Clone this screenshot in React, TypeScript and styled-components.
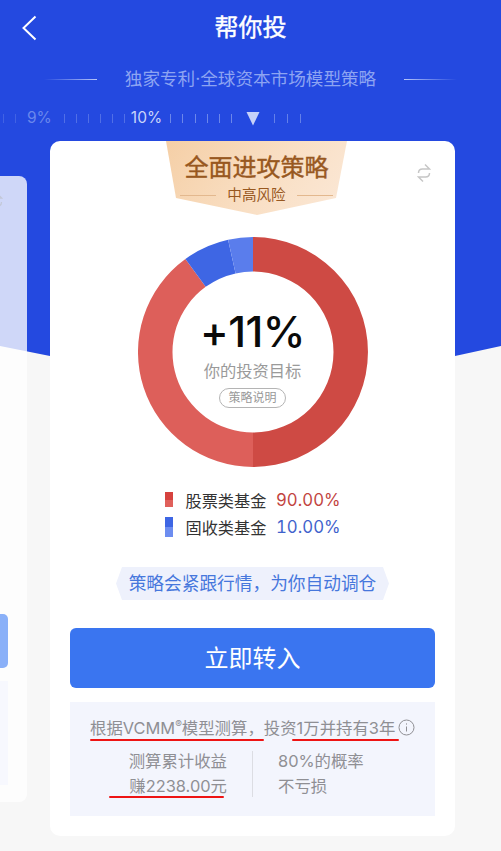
import React from "react";
import styled, { createGlobalStyle } from "styled-components";

// HELPERS --------------------------->

const polar = (r: number, deg: number) => {
  const a = ((deg - 90) * Math.PI) / 180;
  return `${(115 + r * Math.cos(a)).toFixed(2)} ${(115 + r * Math.sin(a)).toFixed(2)}`;
};

const arc = (from: number, to: number) => {
  const large = to - from > 180 ? 1 : 0;
  return `M${polar(115, from)} A115 115 0 ${large} 1 ${polar(115, to)} L${polar(80.5, to)} A80.5 80.5 0 ${large} 0 ${polar(80.5, from)} Z`;
};

// STYLED COMPONENTS --------------------------->

const GlobalStyle = createGlobalStyle`
  html, body {
    margin: 0;
    padding: 0;
    background: #f7f7f7;
  }
  * {
    box-sizing: border-box;
  }
`;

const Page = styled.div`
  position: relative;
  width: 501px;
  height: 851px;
  overflow: hidden;
  background: #f7f7f7;
  font-family: Inter, "Noto Sans CJK SC", "Noto Sans", sans-serif;
`;

const Backdrop = styled.div`
  position: absolute;
  top: 0;
  left: 0;
  width: 501px;
  height: 370px;
  background: #2449e0;
  clip-path: polygon(0 346px, 50px 356px, 150px 364px, 252px 366px, 350px 364px, 455px 356px, 501px 346px, 501px 0, 0 0);
`;

const Content = styled.div`
  position: relative;
  display: flex;
  flex-direction: column;
`;

const Header = styled.header`
  display: flex;
  align-items: center;
  justify-content: center;
  position: relative;
  height: 56px;
`;

const BackButton = styled.svg`
  position: absolute;
  left: 20px;
  top: 14px;
`;

const Title = styled.h1`
  margin: 0;
  font-size: 24px;
  font-weight: 400;
  color: #fff;
  line-height: 1;
  -webkit-text-stroke: 0.4px #fff;
`;

const Slogan = styled.div`
  display: flex;
  align-items: center;
  justify-content: center;
  gap: 28px;
  height: 26px;
  margin-top: 10px;
  font-size: 17.6px;
  line-height: 1;
  color: #8da4f2;
  white-space: nowrap;
`;

const SloganLine = styled.span<{ $flip?: boolean }>`
  width: 53px;
  height: 1px;
  background: linear-gradient(${(p) => (p.$flip ? "to left" : "to right")}, rgba(170, 190, 250, 0), #b7c6f8);
`;

const Ruler = styled.div`
  display: flex;
  align-items: center;
  height: 16px;
  margin-top: 18px;
  padding-left: 3px;
  white-space: nowrap;
`;

const TickGroup = styled.div<{ $fade: number; $width: number }>`
  display: flex;
  justify-content: space-between;
  width: ${(p) => p.$width}px;
  opacity: ${(p) => p.$fade};
`;

const Tick = styled.i`
  display: block;
  width: 1px;
  height: 9px;
  background: #c5d2f8;
`;

const RulerLabel = styled.span<{ $active?: boolean; $gapLeft: number; $gapRight: number }>`
  margin: 0 ${(p) => p.$gapRight}px 0 ${(p) => p.$gapLeft}px;
  font-size: 15.5px;
  line-height: 1;
  color: ${(p) => (p.$active ? "#c9d5fa" : "#6a87ec")};
`;

const Pointer = styled.svg`
  flex: none;
  margin: 0 14px 0 14px;
`;

const Carousel = styled.div`
  display: flex;
  align-items: flex-start;
  gap: 23px;
  margin-top: 15px;
`;

const PeekCard = styled.div`
  position: relative;
  flex: none;
  display: flex;
  flex-direction: column;
  justify-content: flex-end;
  gap: 13px;
  width: 100px;
  height: 626px;
  margin: 35px 0 0 -73px;
  padding: 0 19px 17px 0;
  border-radius: 8px;
  background: rgba(255, 255, 255, 0.78);
`;

const PeekSwap = styled.svg`
  position: absolute;
  right: 24px;
  top: 16px;
`;

const PeekButton = styled.div`
  height: 54px;
  border-radius: 5px;
  background: #8ab0f8;
`;

const PeekInfo = styled.div`
  height: 104px;
  background: #f7f8fe;
`;

const Card = styled.section`
  position: relative;
  flex: none;
  display: flex;
  flex-direction: column;
  align-items: center;
  width: 405px;
  height: 695px;
  border-radius: 10px;
  background: #fff;
`;

const SwapButton = styled.svg`
  position: absolute;
  top: 22px;
  right: 24px;
`;

const Banner = styled.div`
  display: flex;
  flex-direction: column;
  align-items: center;
  width: 181px;
  height: 74px;
  margin-left: 8px;
  padding-top: 12px;
  color: #98581f;
  background: linear-gradient(125deg, #f5cfa6 0%, #f9dfc4 55%, #fbe8d7 100%);
  clip-path: polygon(0 0, 100% 0, 170px 57px, 91px 74px, 10px 57px);
`;

const BannerTitle = styled.div`
  font-size: 24px;
  font-weight: 400;
  line-height: 30px;
  -webkit-text-stroke: 0.4px #98581f;
`;

const BannerSub = styled.div`
  display: flex;
  align-items: center;
  gap: 11px;
  margin-top: 2px;
  font-size: 14.6px;
  line-height: 20px;
`;

const BannerRule = styled.span`
  width: 36px;
  height: 1px;
  background: #e3b88e;
`;

const Donut = styled.div`
  position: relative;
  width: 230px;
  height: 230px;
  margin-top: 22px;
`;

const DonutLabel = styled.div`
  position: absolute;
  inset: 0;
  display: flex;
  flex-direction: column;
  align-items: center;
  padding-top: 67px;
`;

const Goal = styled.div`
  font-size: 43px;
  font-weight: 500;
  line-height: 54px;
  letter-spacing: -0.5px;
  color: #0a0a0a;
`;

const GoalCaption = styled.div`
  margin-top: 1px;
  font-size: 16.3px;
  line-height: 24px;
  color: #9a9a9a;
`;

const ExplainPill = styled.div`
  width: 67px;
  height: 20px;
  margin-top: 5px;
  border: 1px solid #b4b4b4;
  border-radius: 10px;
  font-size: 12px;
  line-height: 18px;
  text-align: center;
  color: #999;
`;

const Legend = styled.div`
  display: flex;
  flex-direction: column;
  width: 176px;
  margin-top: 19px;
`;

const LegendRow = styled.div`
  display: flex;
  align-items: center;
  height: 27px;
`;

const Swatch = styled.span<{ $top: string; $bottom: string; $height: number }>`
  flex: none;
  width: 8px;
  height: ${(p) => p.$height}px;
  margin-right: 13px;
  background: linear-gradient(${(p) => p.$top} 50%, ${(p) => p.$bottom} 50%);
`;

const LegendName = styled.span`
  font-size: 16.2px;
  color: #333;
`;

const LegendValue = styled.span<{ $color: string }>`
  margin-left: auto;
  font-size: 16.8px;
  font-variant-numeric: tabular-nums;
  color: ${(p) => p.$color};
`;

const Tip = styled.div`
  width: 273px;
  height: 33px;
  margin-top: 27px;
  font-size: 17.7px;
  line-height: 33px;
  text-align: center;
  color: #4677dc;
  background: #eef1fc;
  clip-path: polygon(6px 0, calc(100% - 6px) 0, 100% 50%, calc(100% - 6px) 100%, 6px 100%, 0 50%);
`;

const BuyButton = styled.button`
  flex: none;
  width: 365px;
  height: 60px;
  margin-top: 28px;
  padding: 0 0 3px;
  border: 0;
  border-radius: 6px;
  font-family: inherit;
  font-size: 24px;
  color: #fff;
  background: #3a75f0;
`;

const InfoBox = styled.div`
  display: flex;
  flex-direction: column;
  width: 365px;
  height: 114px;
  margin-top: 14px;
  padding-top: 13px;
  font-size: 16.4px;
  color: #8f8f94;
  background: #f3f5fd;
`;

const InfoLine = styled.div`
  display: flex;
  align-items: center;
  height: 24px;
  padding-left: 20px;
  white-space: nowrap;
`;

const Marked = styled.span<{ $left?: number; $right?: number }>`
  position: relative;

  &::after {
    content: "";
    position: absolute;
    left: ${(p) => p.$left ?? 0}px;
    right: ${(p) => p.$right ?? 0}px;
    bottom: -2px;
    height: 2.5px;
    border-radius: 2px;
    background: #ee1414;
  }
`;

const Registered = styled.sup`
  font-size: 10px;
  line-height: 0;
`;

const InfoIcon = styled.svg`
  flex: none;
  margin-left: 3px;
`;

const Stats = styled.div`
  display: grid;
  grid-template-columns: 157px 1px 1fr;
  column-gap: 25px;
  margin-top: 10px;
  padding-top: 0;
`;

const StatText = styled.div<{ $right?: boolean }>`
  line-height: 25px;
  text-align: ${(p) => (p.$right ? "right" : "left")};
  white-space: nowrap;
`;

const StatDivider = styled.div`
  height: 46px;
  margin-top: 2px;
  background: #dcdde3;
`;

// FUNCTIONAL COMPONENT --------------------------->

const SwapPaths = () => (
  <>
    <path d="M1.5 10 C1.5 7.5 3 6 5.5 6 H12.5 L8 1.5" />
    <path d="M12.5 10 C12.5 12.5 11 14 8.5 14 H1.5 L6 18.5" />
  </>
);

const Ticks = ({ count, fade, width }: { count: number; fade: number; width: number }) => (
  <TickGroup $fade={fade} $width={width}>
    {Array.from({ length: count }).map((_, i) => (
      <Tick key={i} />
    ))}
  </TickGroup>
);

const App = () => {
  return (
    <Page>
      <GlobalStyle />
      <Backdrop />
      <Content>
        <Header>
          <BackButton width="18" height="28" viewBox="0 0 18 28" fill="none" stroke="#fff" strokeWidth="2">
            <path d="M15.5 2.5 L3.5 14 L15.5 25.5" />
          </BackButton>
          <Title>帮你投</Title>
        </Header>

        <Slogan>
          <SloganLine />
          <span>独家专利·全球资本市场模型策略</span>
          <SloganLine $flip />
        </Slogan>

        <Ruler>
          <Ticks count={2} fade={0.18} width={13} />
          <RulerLabel $gapLeft={11} $gapRight={12}>9%</RulerLabel>
          <Ticks count={6} fade={0.28} width={61} />
          <RulerLabel $active $gapLeft={6} $gapRight={8}>10%</RulerLabel>
          <Ticks count={6} fade={0.45} width={62} />
          <Pointer width="14" height="15" viewBox="0 0 14 15">
            <path d="M0.5 1 H13.5 L7 14.5 Z" fill="#c6d1f9" />
          </Pointer>
          <Ticks count={3} fade={0.4} width={27} />
        </Ruler>

        <Carousel>
          <PeekCard>
            <PeekSwap width="14" height="20" viewBox="0 0 14 20" fill="none" stroke="#c3c8d8" strokeWidth="1.3">
              <SwapPaths />
            </PeekSwap>
            <PeekButton />
            <PeekInfo />
          </PeekCard>

          <Card>
            <SwapButton width="14" height="20" viewBox="0 0 14 20" fill="none" stroke="#c6c6c6" strokeWidth="1.5">
              <SwapPaths />
            </SwapButton>

            <Banner>
              <BannerTitle>全面进攻策略</BannerTitle>
              <BannerSub>
                <BannerRule />
                中高风险
                <BannerRule />
              </BannerSub>
            </Banner>

            <Donut>
              <svg width="230" height="230" viewBox="0 0 230 230">
                <path d={arc(0, 180)} fill="#ce4a44" />
                <path d={arc(180, 324)} fill="#dd5f5a" />
                <path d={arc(324, 347.5)} fill="#3e66e4" />
                <path d={arc(347.5, 360)} fill="#5a7dec" />
              </svg>
              <DonutLabel>
                <Goal>+11%</Goal>
                <GoalCaption>你的投资目标</GoalCaption>
                <ExplainPill>策略说明</ExplainPill>
              </DonutLabel>
            </Donut>

            <Legend>
              <LegendRow>
                <Swatch $top="#d6423e" $bottom="#e0605b" $height={15} />
                <LegendName>股票类基金</LegendName>
                <LegendValue $color="#c2443f">90.00%</LegendValue>
              </LegendRow>
              <LegendRow>
                <Swatch $top="#3e66e4" $bottom="#6d8df0" $height={20} />
                <LegendName>固收类基金</LegendName>
                <LegendValue $color="#3f62cc">10.00%</LegendValue>
              </LegendRow>
            </Legend>

            <Tip>策略会紧跟行情，为你自动调仓</Tip>

            <BuyButton>立即转入</BuyButton>

            <InfoBox>
              <InfoLine>
                <Marked>
                  根据VCMM<Registered>®</Registered>模型测算，
                </Marked>
                <span>投资</span>
                <Marked $left={-5} $right={-4}>1万并持有3年</Marked>
                <InfoIcon width="17" height="17" viewBox="0 0 17 17" fill="none" stroke="#8f8f94" strokeWidth="1">
                  <circle cx="8.5" cy="8.5" r="7.5" />
                  <path d="M8.5 7.5 V12.5" />
                  <path d="M8.5 4.4 V5.6" />
                </InfoIcon>
              </InfoLine>
              <Stats>
                <div>
                  <StatText $right>测算累计收益</StatText>
                  <StatText $right>
                    <Marked $left={-20} $right={3}>赚2238.00元</Marked>
                  </StatText>
                </div>
                <StatDivider />
                <div>
                  <StatText>80%的概率</StatText>
                  <StatText>不亏损</StatText>
                </div>
              </Stats>
            </InfoBox>
          </Card>
        </Carousel>
      </Content>
    </Page>
  );
};

export default App;
